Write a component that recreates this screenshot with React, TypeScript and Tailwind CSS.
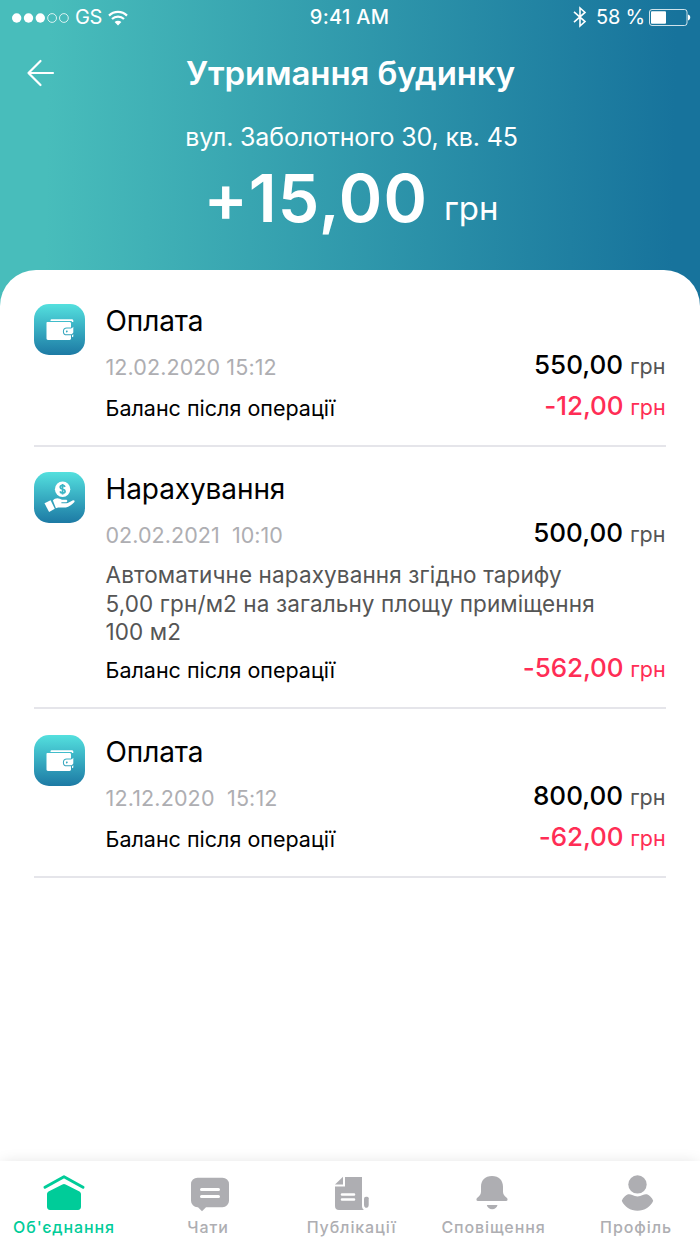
import type { ReactNode } from 'react';

type Operation = {
  kind: 'payment' | 'charge';
  title: string;
  date: string;
  dateClass: string;
  amount: string;
  balance: string;
  note?: string[];
  className: string;
};

const operations: Operation[] = [
  {
    kind: 'payment',
    title: 'Оплата',
    date: '12.02.2020 15:12',
    dateClass: 'tracking-[0.1px]',
    amount: '550,00',
    balance: '-12,00',
    className: 'h-[143px]',
  },
  {
    kind: 'charge',
    title: 'Нарахування',
    date: '02.02.2021  10:10',
    dateClass: 'tracking-[0.05px]',
    amount: '500,00',
    balance: '-562,00',
    note: ['Автоматичне нарахування згідно тарифу', '5,00 грн/м2 на загальну площу приміщення', '100 м2'],
    className: 'mt-[25px] h-[237px]',
  },
  {
    kind: 'payment',
    title: 'Оплата',
    date: '12.12.2020  15:12',
    dateClass: 'tracking-[0.15px]',
    amount: '800,00',
    balance: '-62,00',
    className: 'mt-[26px] h-[143px]',
  },
];

function StatusBar() {
  return (
    <div className="grid h-[34px] grid-cols-3 items-center pl-3 pr-[9px] text-[20px] leading-none">
      <div className="flex items-center">
        <svg className="mt-[2px]" width="58" height="12" viewBox="0 0 58 12" fill="none">
          <circle cx="4.7" cy="6" r="4.7" fill="white" />
          <circle cx="16.5" cy="6" r="4.7" fill="white" />
          <circle cx="28.3" cy="6" r="4.7" fill="white" />
          <circle cx="40.1" cy="6" r="4.4" stroke="white" strokeWidth="0.8" />
          <circle cx="51.9" cy="6" r="4.4" stroke="white" strokeWidth="0.8" />
        </svg>
        <span className="ml-[5px] tracking-[-0.5px]">GS</span>
        <svg className="ml-[6px] mt-[1px]" width="20" height="16" viewBox="0 0 20 16" fill="none" stroke="white" strokeWidth="2.2">
          <path d="M1 5.6a12.8 12.8 0 0 1 18 0" />
          <path d="M4 9a8.6 8.6 0 0 1 12 0" />
          <path d="M10 15.6 6.6 12.1a4.9 4.9 0 0 1 6.8 0Z" fill="white" stroke="none" />
        </svg>
      </div>
      <span className="pr-[4px] text-center font-medium tracking-[0.3px]">9:41 AM</span>
      <div className="flex items-center justify-end">
        <svg width="14" height="22" viewBox="0 0 14 22" fill="none" stroke="white" strokeWidth="1.6">
          <path d="M1 5.8 12 15.6 7 20V2l5 4.4L1 16.2" />
        </svg>
        <span className="ml-[9px] tracking-[-0.2px]">58 %</span>
        <svg className="ml-[4px] mt-[1px]" width="42" height="17" viewBox="0 0 42 17" fill="none">
          <rect x="0.5" y="0.5" width="37.5" height="16" rx="2.5" stroke="white" strokeWidth="0.8" />
          <rect x="2" y="2.2" width="15" height="12.6" rx="1" fill="white" />
          <path d="M39 5.6c3 .7 3 5.1 0 5.8Z" fill="white" />
        </svg>
      </div>
    </div>
  );
}

function WalletIcon() {
  return (
    <svg width="28" height="22" viewBox="0 0 28 22" fill="white">
      <path d="M4.5 1.5c0-.8.5-1.2 1.3-1.2h20c.9 0 1.5.6 1.5 1.4v1.2h-1.5V2H4.5Z" />
      <path d="M1.5 3h22.1c.8 0 1.4.6 1.4 1.4v4.1h-4.2a3.9 3.9 0 0 0 0 7.8H25v3.3c0 .8-.6 1.4-1.4 1.4H1.900c-.8 0-1.4-.6-1.4-1.4V4c0-.6.4-1 1-1Z" />
      <path d="M20.8 9.500h4c1 0 1.5-.6 2.5-1.7v5.7c-.7 1.1-1.4 1.8-2.5 1.8h-4a2.9 2.9 0 0 1 0-5.8Zm.3 2.1a.9.9 0 1 0 0 1.7.9.9 0 0 0 0-1.7Z" fillRule="evenodd" />
      <path d="M26 16.3l1.3-1v2.1L26 18.3Z" />
    </svg>
  );
}

function HandCoinIcon() {
  return (
    <svg width="32" height="33" viewBox="0 0 32 33" fill="white">
      <circle cx="18.6" cy="8.2" r="7.7" />
      <path d="M21 5.9c-.4-1-1.3-1.5-2.4-1.5-1.4 0-2.4.7-2.4 1.8 0 2.6 4.9 1.3 4.9 4 0 1.2-1.1 1.9-2.5 1.9-1.2 0-2.2-.6-2.6-1.7M18.6 2.9v10.7" fill="none" stroke="#3cb6c5" strokeWidth="1.7" />
      <path d="M.5 22.3 6.6 19.2l4.2 8.6-5.7 3.3Z" />
      <path d="M8.9 19.6c1.7-2.2 4.3-2.9 6.8-1.8l2.3 1h3.9c1.9 0 1.9 2.5 0 2.5h-4.5v.9h5.1c1.8-.1 3.3-1.6 6-2.8 1.7-.7 2.8.5 1.7 1.8-2.3 2.5-5.2 4.7-8.3 5.2-3.5.5-6.9-.4-10 .8Z" />
    </svg>
  );
}

function OperationIcon({ kind }: { kind: Operation['kind'] }) {
  return (
    <div className="flex size-[51px] shrink-0 items-center justify-center rounded-[15px] bg-linear-to-b from-[#54e0de] to-[#1d7aa4]">
      {kind === 'payment' ? <WalletIcon /> : <HandCoinIcon />}
    </div>
  );
}

function OperationRow({ operation }: { operation: Operation }) {
  const { kind, title, date, dateClass, amount, balance, note, className } = operation;

  return (
    <li className={`flex border-b-2 border-[#e5e5ea] ${className}`}>
      <OperationIcon kind={kind} />
      <div className="ml-[20.5px] flex-1">
        <h2 className="text-[28px] leading-[34px] tracking-[-0.1px]">{title}</h2>
        <div className="mt-[8px] flex h-[41px] items-center justify-between">
          <time className={`mt-[2px] whitespace-pre text-[21.5px] text-[#aeaeb2] ${dateClass}`}>{date}</time>
          <p className="mt-[-5px] pr-[0.5px] text-[26px] font-medium">
            {amount} <span className="text-[21.5px] font-normal text-[#555]">грн</span>
          </p>
        </div>
        {note && (
          <p className="mb-[2px] mt-[6px] text-[22.5px] leading-[28.7px] tracking-[0.12px] text-[#555]">
            {note.map((line) => (
              <span key={line} className="block whitespace-nowrap">{line}</span>
            ))}
          </p>
        )}
        <div className="flex h-[41px] items-center justify-between">
          <span className="mt-[2px] text-[21.5px]">Баланс після операції</span>
          <p className="mt-[-5px] pr-[0.5px] text-[26px] font-medium tracking-[-0.1px] text-[#ff2d55]">
            {balance} <span className="text-[21.5px] font-normal">грн</span>
          </p>
        </div>
      </div>
    </li>
  );
}

type TabProps = {
  label: string;
  active?: boolean;
  className: string;
  iconClass?: string;
  children: ReactNode;
};

function Tab({ label, active, className, iconClass = '', children }: TabProps) {
  return (
    <a className={`flex flex-col items-center ${active ? 'text-[#00cc99]' : 'text-[#aeaeb2]'} ${className}`}>
      <svg className={iconClass} width="46" height="42" viewBox="0 0 46 42" fill="currentColor">
        {children}
      </svg>
      <span className="mt-[2px] whitespace-nowrap text-[16px] font-medium leading-[22px] tracking-[0.9px]">{label}</span>
    </a>
  );
}

function TabBar() {
  return (
    <nav className="z-20 flex h-[83px] bg-white pt-[11px] shadow-[0_0_14px_-2px_rgba(0,0,0,0.13)]">
      <Tab label="Об'єднання" active className="w-[128px]">
        <path d="M4 15.2 23 4.8l19 10.4" fill="none" stroke="currentColor" strokeWidth="3" strokeLinecap="round" strokeLinejoin="round" />
        <path d="M21.4 12.5a3.5 3.5 0 0 1 3.2 0L38 19.2c1.2.7 2 1.5 2 3v12.6c0 2-1.1 3.2-3 3.2H9c-1.9 0-3-1.2-3-3.2V22.2c0-1.5.8-2.3 2-3Z" />
      </Tab>
      <Tab label="Чати" className="w-[160px]" iconClass="ml-[4px]">
        <path d="M10.5 5.7h25a6.5 6.5 0 0 1 6.5 6.5v16.5a6.5 6.5 0 0 1-6.5 6.5H19l-4 4-4-4h-.5A6.5 6.5 0 0 1 4 28.7V12.2a6.5 6.5 0 0 1 6.5-6.5Z" />
        <path d="M14.5 17.500h17M14.5 24.400h17" stroke="white" strokeWidth="3" strokeLinecap="round" />
      </Tab>
      <Tab label="Публікації" className="w-[127px]" iconClass="ml-[1px]">
        <path d="M6 12.5 14 4.8v7.7Z" />
        <path d="M16 5h17v29c0 1.8.7 3 2 4H10c-2.6 0-4-1.4-4-4V14.500h10Z" />
        <path d="M13 22.500h12M13 27.500h12" stroke="white" strokeWidth="2.6" strokeLinecap="round" />
        <path d="M37 24.700h1.2a1.5 1.5 0 0 1 1.5 1.5v6.5c0 4.2-4.7 4.2-4.7 0v-6a2 2 0 0 1 2-2Z" />
      </Tab>
      <Tab label="Сповіщення" className="w-[157px]" iconClass="mr-[4px]">
        <path d="M23 4c-7 0-11 4.500-11 10.800v4.700c0 2.500-1 4.200-3.700 6.300-1.500 1.400-1 3.200.7 3.200h28c1.700 0 2.200-1.800.7-3.200-2.700-2.100-3.700-3.800-3.700-6.300v-4.700C34 8.500 30 4 23 4Z" />
        <path d="M17.8 33h10.7c-.6 2.500-2.600 4.200-5.300 4.200S18.4 35.500 17.800 33Z" />
      </Tab>
      <Tab label="Профіль" className="w-[128px]" iconClass="ml-[2px]">
        <circle cx="23.5" cy="12.4" r="9.2" />
        <path d="M14 22.3c1.5-.4 3 .1 4.200.8a11.5 11.5 0 0 0 10.600 0c1.200-.7 2.700-1.200 4.200-.8 2.500.7 5 3.500 6.200 6.400C36.700 34.700 30.500 38.700 23.500 38.700S10.300 34.700 7.800 28.700c1.200-2.900 3.700-5.700 6.200-6.400Z" />
      </Tab>
    </nav>
  );
}

export default function App() {
  return (
    <div className="flex h-[1244px] w-[700px] flex-col overflow-hidden bg-white font-['Inter','Liberation_Sans',sans-serif] text-black">
      <header className="h-[310px] shrink-0 bg-[linear-gradient(91deg,#48bdbb_7%,#17739c_96%)] text-white">
        <StatusBar />
        <div className="mt-[18px] grid grid-cols-[80px_1fr_80px] items-center">
          <svg className="ml-[26px]" width="30" height="30" viewBox="0 0 30 30" fill="none" stroke="white" strokeWidth="2.2" strokeLinecap="round" strokeLinejoin="round">
            <path d="M27 15H2.5M14.5 3 2.5 15l12 12" />
          </svg>
          <h1 className="pl-px text-center text-[33px] font-semibold leading-[42px] tracking-[-0.1px]">Утримання будинку</h1>
        </div>
        <p className="mt-[27px] pl-[3px] text-center text-[25px] leading-8 tracking-[-0.15px]">вул. Заболотного 30, кв. 45</p>
        <p className="mt-[5px] pl-[2px] text-center text-[66px] font-semibold leading-[80px] tracking-[1px]">
          +15,00<span className="relative -top-[2px] ml-[16px] text-[33px] font-normal tracking-normal">грн</span>
        </p>
      </header>
      <main className="z-10 -mt-10 flex-1 rounded-t-[36px] bg-white px-[34px] pt-[34px]">
        <ul>
          {operations.map((operation) => (
            <OperationRow key={operation.date} operation={operation} />
          ))}
        </ul>
      </main>
      <TabBar />
    </div>
  );
}
